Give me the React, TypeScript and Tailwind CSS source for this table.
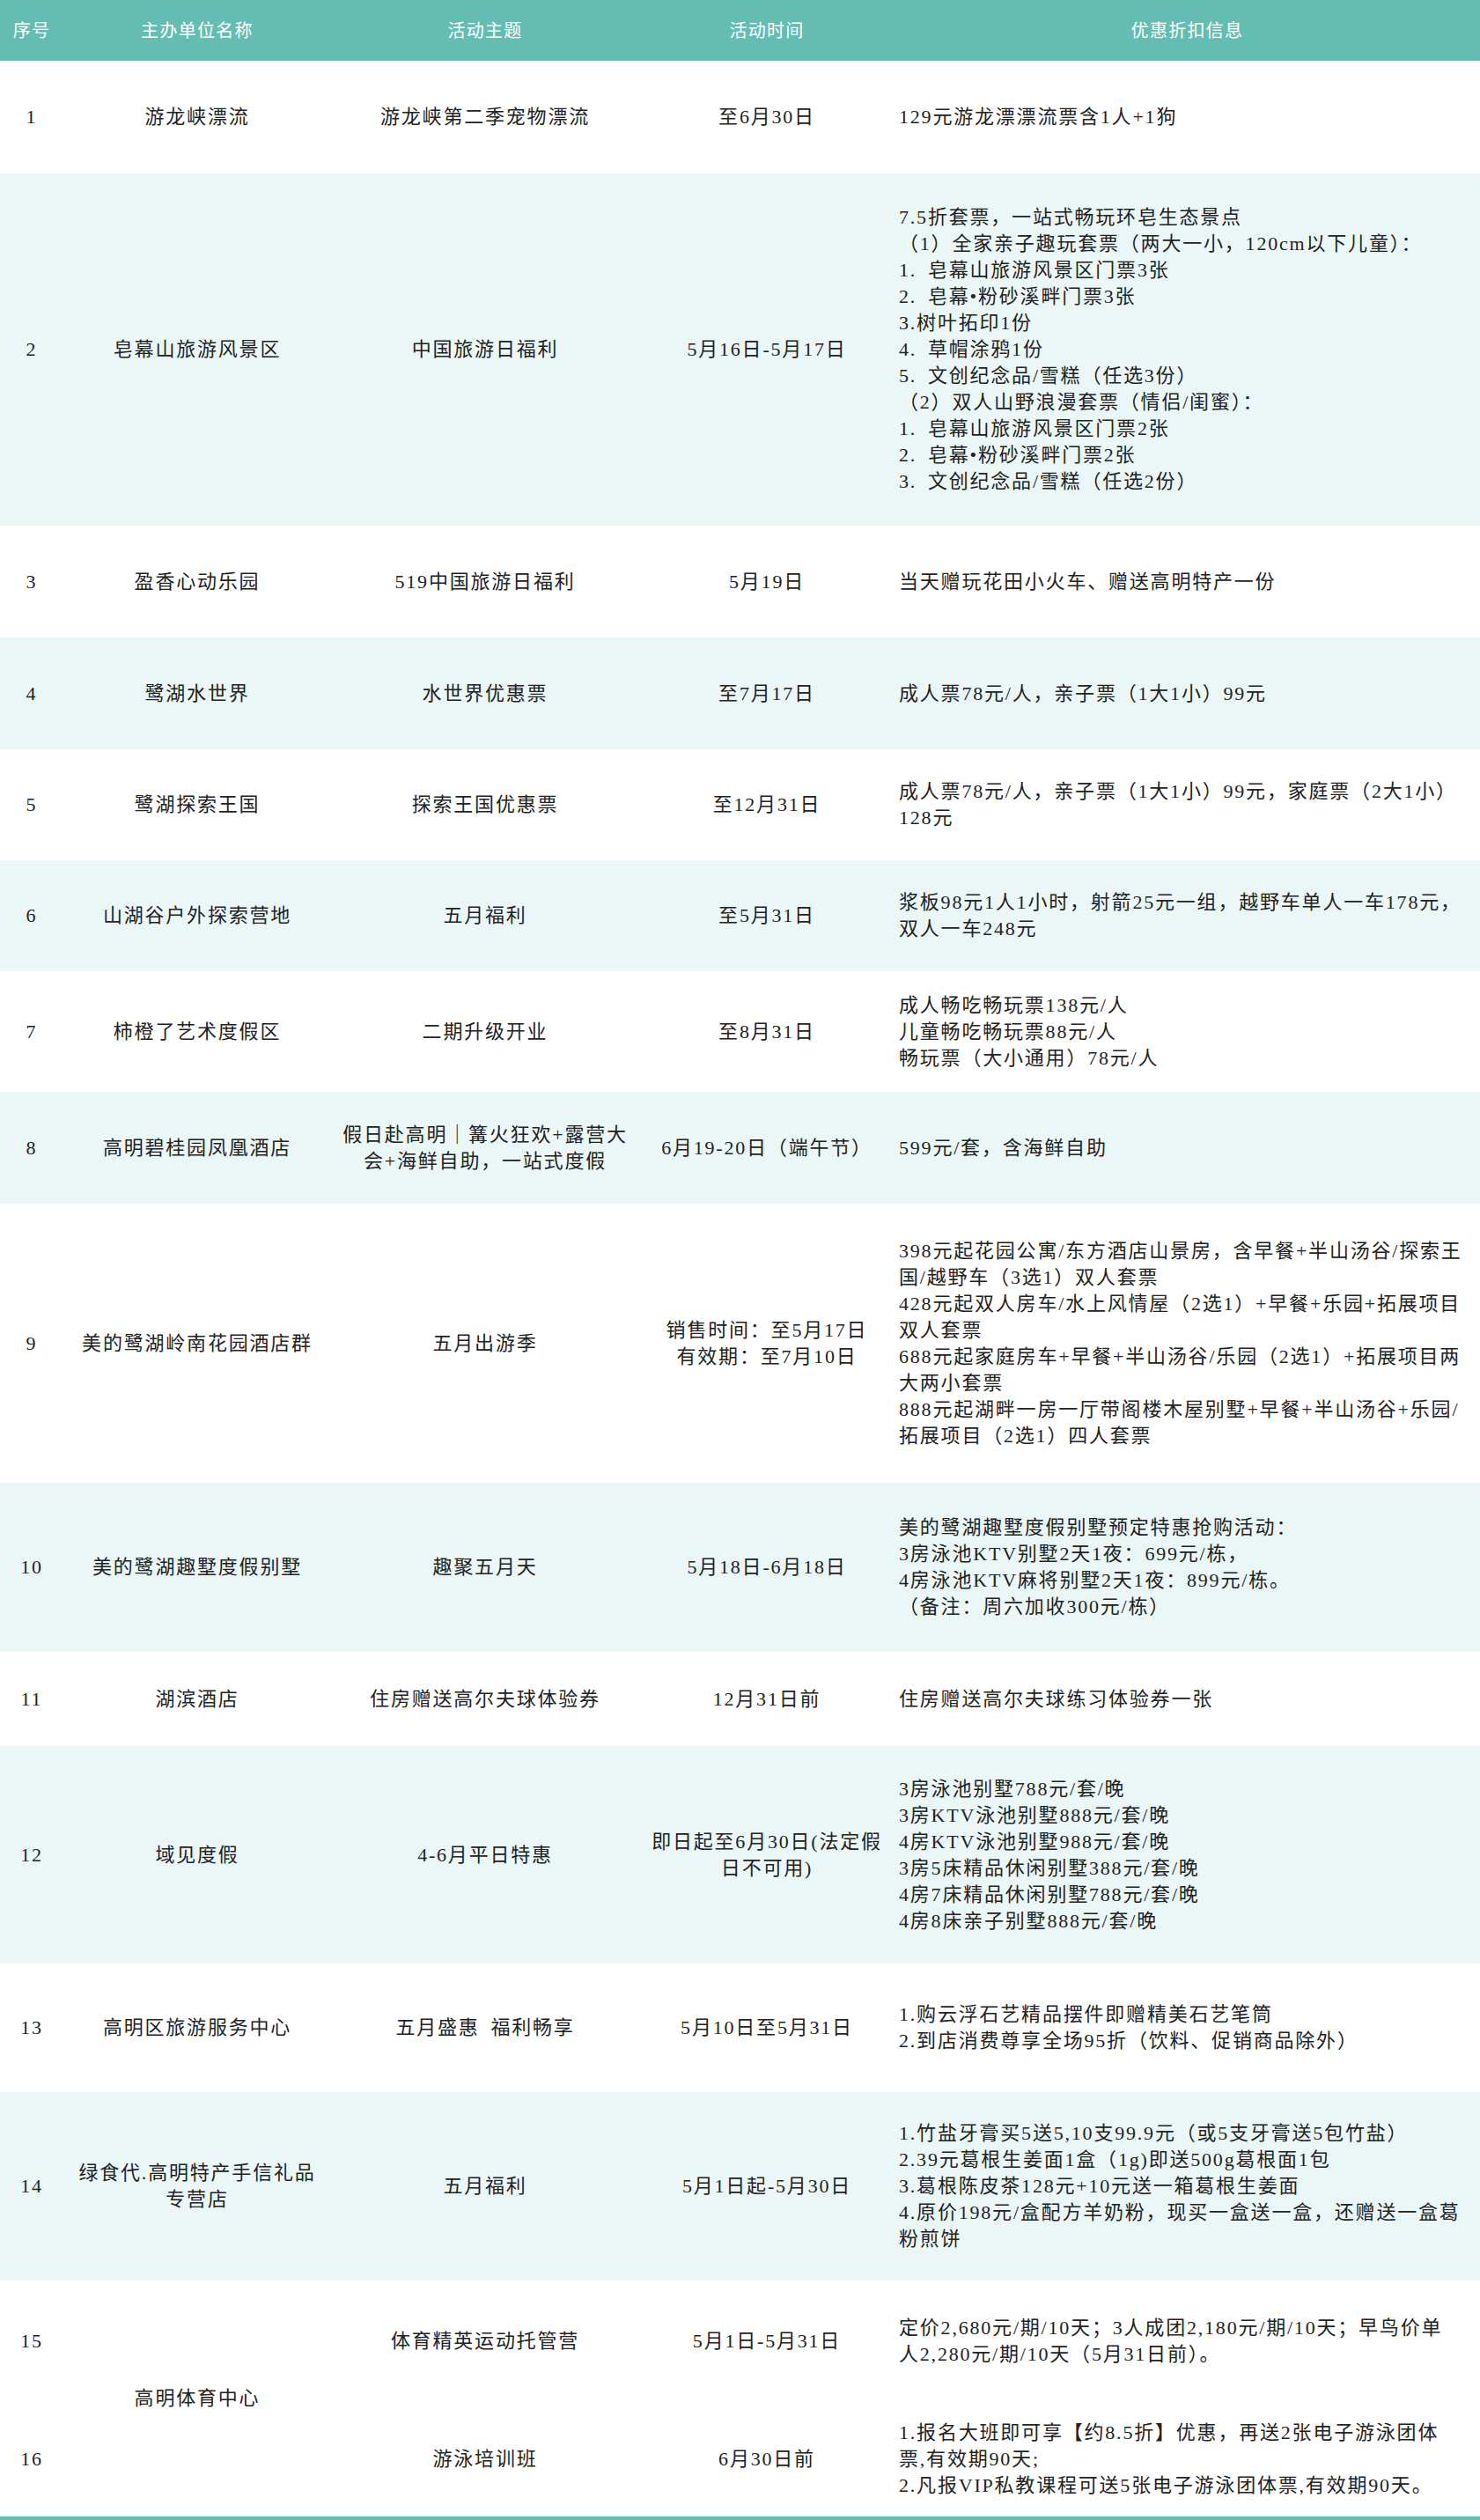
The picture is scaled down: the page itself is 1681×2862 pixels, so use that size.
type Row = {
  no: string;
  org?: string[];
  orgSpan?: number;
  theme: string[];
  time: string[];
  info: string[];
  h: string;
  tint: boolean;
};

const rows: Row[] = [
  {
    no: "1",
    org: ["游龙峡漂流"],
    theme: ["游龙峡第二季宠物漂流"],
    time: ["至6月30日"],
    info: ["129元游龙漂漂流票含1人+1狗"],
    h: "h-[128px]",
    tint: false,
  },
  {
    no: "2",
    org: ["皂幕山旅游风景区"],
    theme: ["中国旅游日福利"],
    time: ["5月16日-5月17日"],
    info: [
      "7.5折套票，一站式畅玩环皂生态景点",
      "（1）全家亲子趣玩套票（两大一小，120cm以下儿童）：",
      "1.\u2002皂幕山旅游风景区门票3张",
      "2.\u2002皂幕•粉砂溪畔门票3张",
      "3.树叶拓印1份",
      "4.\u2002草帽涂鸦1份",
      "5.\u2002文创纪念品/雪糕（任选3份）",
      "（2）双人山野浪漫套票（情侣/闺蜜）：",
      "1.\u2002皂幕山旅游风景区门票2张",
      "2.\u2002皂幕•粉砂溪畔门票2张",
      "3.\u2002文创纪念品/雪糕（任选2份）",
    ],
    h: "h-[400px]",
    tint: true,
  },
  {
    no: "3",
    org: ["盈香心动乐园"],
    theme: ["519中国旅游日福利"],
    time: ["5月19日"],
    info: ["当天赠玩花田小火车、赠送高明特产一份"],
    h: "h-[127px]",
    tint: false,
  },
  {
    no: "4",
    org: ["鹭湖水世界"],
    theme: ["水世界优惠票"],
    time: ["至7月17日"],
    info: ["成人票78元/人，亲子票（1大1小）99元"],
    h: "h-[127px]",
    tint: true,
  },
  {
    no: "5",
    org: ["鹭湖探索王国"],
    theme: ["探索王国优惠票"],
    time: ["至12月31日"],
    info: ["成人票78元/人，亲子票（1大1小）99元，家庭票（2大1小）", "128元"],
    h: "h-[126px]",
    tint: false,
  },
  {
    no: "6",
    org: ["山湖谷户外探索营地"],
    theme: ["五月福利"],
    time: ["至5月31日"],
    info: ["浆板98元1人1小时，射箭25元一组，越野车单人一车178元，", "双人一车248元"],
    h: "h-[126px]",
    tint: true,
  },
  {
    no: "7",
    org: ["柿橙了艺术度假区"],
    theme: ["二期升级开业"],
    time: ["至8月31日"],
    info: ["成人畅吃畅玩票138元/人", "儿童畅吃畅玩票88元/人", "畅玩票（大小通用）78元/人"],
    h: "h-[137px]",
    tint: false,
  },
  {
    no: "8",
    org: ["高明碧桂园凤凰酒店"],
    theme: ["假日赴高明｜篝火狂欢+露营大", "会+海鲜自助，一站式度假"],
    time: ["6月19-20日（端午节）"],
    info: ["599元/套，含海鲜自助"],
    h: "h-[127px]",
    tint: true,
  },
  {
    no: "9",
    org: ["美的鹭湖岭南花园酒店群"],
    theme: ["五月出游季"],
    time: ["销售时间：至5月17日", "有效期：至7月10日"],
    info: [
      "398元起花园公寓/东方酒店山景房，含早餐+半山汤谷/探索王",
      "国/越野车（3选1）双人套票",
      "428元起双人房车/水上风情屋（2选1）+早餐+乐园+拓展项目",
      "双人套票",
      "688元起家庭房车+早餐+半山汤谷/乐园（2选1）+拓展项目两",
      "大两小套票",
      "888元起湖畔一房一厅带阁楼木屋别墅+早餐+半山汤谷+乐园/",
      "拓展项目（2选1）四人套票",
    ],
    h: "h-[317px]",
    tint: false,
  },
  {
    no: "10",
    org: ["美的鹭湖趣墅度假别墅"],
    theme: ["趣聚五月天"],
    time: ["5月18日-6月18日"],
    info: [
      "美的鹭湖趣墅度假别墅预定特惠抢购活动：",
      "3房泳池KTV别墅2天1夜：699元/栋，",
      "4房泳池KTV麻将别墅2天1夜：899元/栋。",
      "（备注：周六加收300元/栋）",
    ],
    h: "h-[192px]",
    tint: true,
  },
  {
    no: "11",
    org: ["湖滨酒店"],
    theme: ["住房赠送高尔夫球体验券"],
    time: ["12月31日前"],
    info: ["住房赠送高尔夫球练习体验券一张"],
    h: "h-[107px]",
    tint: false,
  },
  {
    no: "12",
    org: ["域见度假"],
    theme: ["4-6月平日特惠"],
    time: ["即日起至6月30日(法定假", "日不可用)"],
    info: [
      "3房泳池别墅788元/套/晚",
      "3房KTV泳池别墅888元/套/晚",
      "4房KTV泳池别墅988元/套/晚",
      "3房5床精品休闲别墅388元/套/晚",
      "4房7床精品休闲别墅788元/套/晚",
      "4房8床亲子别墅888元/套/晚",
    ],
    h: "h-[247px]",
    tint: true,
  },
  {
    no: "13",
    org: ["高明区旅游服务中心"],
    theme: ["五月盛惠\u2002福利畅享"],
    time: ["5月10日至5月31日"],
    info: ["1.购云浮石艺精品摆件即赠精美石艺笔筒", "2.到店消费尊享全场95折（饮料、促销商品除外）"],
    h: "h-[146px]",
    tint: false,
  },
  {
    no: "14",
    org: ["绿食代.高明特产手信礼品", "专营店"],
    theme: ["五月福利"],
    time: ["5月1日起-5月30日"],
    info: [
      "1.竹盐牙膏买5送5,10支99.9元（或5支牙膏送5包竹盐）",
      "2.39元葛根生姜面1盒（1g)即送500g葛根面1包",
      "3.葛根陈皮茶128元+10元送一箱葛根生姜面",
      "4.原价198元/盒配方羊奶粉，现买一盒送一盒，还赠送一盒葛",
      "粉煎饼",
    ],
    h: "h-[214px]",
    tint: true,
  },
  {
    no: "15",
    org: ["高明体育中心"],
    orgSpan: 2,
    theme: ["体育精英运动托管营"],
    time: ["5月1日-5月31日"],
    info: ["定价2,680元/期/10天；3人成团2,180元/期/10天；早鸟价单", "人2,280元/期/10天（5月31日前）。"],
    h: "h-[138px]",
    tint: false,
  },
  {
    no: "16",
    theme: ["游泳培训班"],
    time: ["6月30日前"],
    info: [
      "1.报名大班即可享【约8.5折】优惠，再送2张电子游泳团体",
      "票,有效期90天;",
      "2.凡报VIP私教课程可送5张电子游泳团体票,有效期90天。",
    ],
    h: "h-[130px]",
    tint: false,
  },
];

function Lines({ items }: { items: string[] }) {
  return (
    <>
      {items.map((t, i) => (
        <div key={i} className="whitespace-nowrap">
          {t}
        </div>
      ))}
    </>
  );
}

export default function App() {
  return (
    <div className="w-[1681px] bg-white font-['Liberation_Serif','Noto_Sans_CJK_SC',serif] text-[#222]">
      <table className="w-[1681px] table-fixed border-collapse">
        <colgroup>
          <col className="w-[72px]" />
          <col className="w-[304px]" />
          <col className="w-[350px]" />
          <col className="w-[290px]" />
          <col className="w-[665px]" />
        </colgroup>
        <thead>
          <tr className="h-[69px] bg-[#63bdb3] text-[20px] tracking-[1.3px] text-white">
            <th className="p-0 text-center font-normal">序号</th>
            <th className="p-0 text-center font-normal">主办单位名称</th>
            <th className="p-0 text-center font-normal">活动主题</th>
            <th className="p-0 text-center font-normal">活动时间</th>
            <th className="p-0 text-center font-normal">优惠折扣信息</th>
          </tr>
        </thead>
        <tbody className="text-[22px] leading-[30px] tracking-[1.8px]">
          {rows.map((r) => (
            <tr key={r.no} className={`${r.h} ${r.tint ? "bg-[#ebf7f6]" : "bg-white"}`}>
              <td className="p-0 text-center align-middle">{r.no}</td>
              {r.org && (
                <td rowSpan={r.orgSpan ?? 1} className="p-0 text-center align-middle">
                  <Lines items={r.org} />
                </td>
              )}
              <td className="p-0 text-center align-middle">
                <Lines items={r.theme} />
              </td>
              <td className="p-0 text-center align-middle">
                <Lines items={r.time} />
              </td>
              <td className="p-0 pl-[5px] text-left align-middle">
                <Lines items={r.info} />
              </td>
            </tr>
          ))}
        </tbody>
      </table>
      <div className="h-[4px] bg-[#63bdb3]" />
    </div>
  );
}
